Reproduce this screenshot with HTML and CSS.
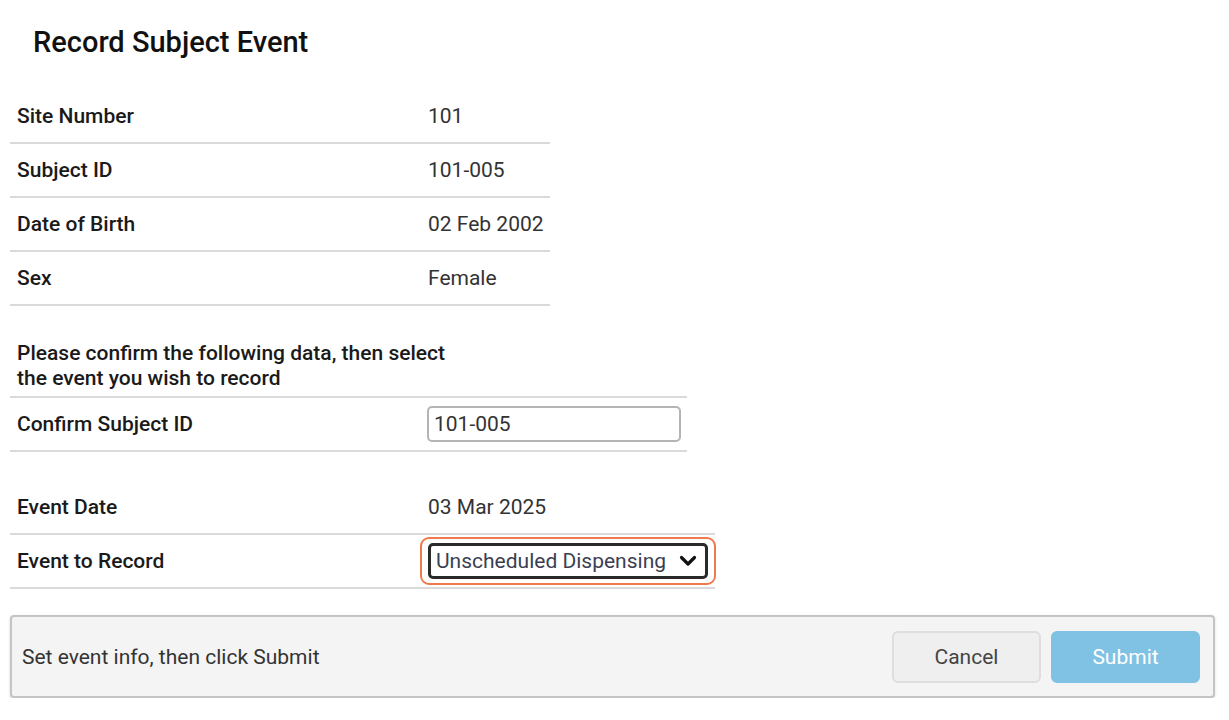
FILE: index.html
```html
<!DOCTYPE html>
<html>
<head>
<meta charset="utf-8">
<link rel="stylesheet" href="styles.css">
</head>
<body>
<div class="page">
  <h1 class="title">Record Subject Event</h1>

  <div class="table t1">
    <div class="row"><div class="label">Site Number</div><div class="value">101</div></div>
    <div class="row"><div class="label">Subject ID</div><div class="value">101-005</div></div>
    <div class="row"><div class="label">Date of Birth</div><div class="value">02 Feb 2002</div></div>
    <div class="row"><div class="label">Sex</div><div class="value">Female</div></div>
  </div>

  <div class="table t2">
    <div class="intro">Please confirm the following data, then select<br>the event you wish to record</div>
    <div class="row"><div class="label">Confirm Subject ID</div><div class="value"><div class="input">101-005</div></div></div>
  </div>

  <div class="table t3">
    <div class="row"><div class="label">Event Date</div><div class="value">03 Mar 2025</div></div>
    <div class="row"><div class="label">Event to Record</div><div class="value">
      <div class="focus-ring"><div class="select"><span>Unscheduled Dispensing</span>
        <svg class="chev" width="18" height="12" viewBox="0 0 18 12"><path d="M2.5 2.5 L9 9 L15.5 2.5" fill="none" stroke="#111" stroke-width="3.2" stroke-linecap="round" stroke-linejoin="round"/></svg>
      </div></div>
    </div></div>
  </div>

  <div class="footer">
    <div class="footer-text">Set event info, then click Submit</div>
    <div class="actions">
      <button class="btn cancel">Cancel</button>
      <button class="btn submit">Submit</button>
    </div>
  </div>
</div>
</body>
</html>
```

FILE: styles.css
```css
html, body {
  margin: 0;
  padding: 0;
  background: #ffffff;
}
body {
  font-family: Roboto, "Liberation Sans", Arial, sans-serif;
  color: #1e1e1e;
}
.page {
  padding: 0 14px 0 10px;
}
.title {
  margin: 0;
  padding: 24px 0 0 23px;
  height: 66px;
  box-sizing: border-box;
  font-size: 29px;
  font-weight: 500;
  line-height: 36px;
  color: #111;
}
.table {
  display: flex;
  flex-direction: column;
}
.t1 { width: 540px; margin-top: 24px; }
.t2 { width: 677px; margin-top: 35px; }
.t3 { width: 705px; margin-top: 29px; }
.row {
  display: grid;
  grid-template-columns: 418px 1fr;
  align-items: center;
  height: 52px;
  border-bottom: 2px solid #dadada;
  font-size: 21px;
}
.label {
  padding-left: 7px;
  font-weight: 500;
  color: #1a1a1a;
}
.value {
  color: #333;
}
.intro {
  padding: 0 0 5px 7px;
  font-size: 21px;
  font-weight: 500;
  line-height: 25px;
  color: #1a1a1a;
  border-bottom: 2px solid #dadada;
}
.input {
  width: 254px;
  height: 36px;
  box-sizing: border-box;
  margin-left: -1px;
  border: 2px solid #b4b4b4;
  border-radius: 5px;
  padding: 0 5px;
  display: flex;
  align-items: center;
  color: #333;
}
.focus-ring {
  margin-left: -8px;
  width: 296px;
  height: 48px;
  box-sizing: border-box;
  border: 2px solid #f07a4e;
  border-radius: 9px;
  padding: 4px 6px;
}
.select {
  height: 36px;
  box-sizing: border-box;
  border: 3px solid #2a2a2a;
  border-radius: 5px;
  display: flex;
  align-items: center;
  justify-content: space-between;
  padding: 0 8px 0 5px;
  color: #3a3f52;
  white-space: nowrap;
  overflow: hidden;
}
.chev { flex: none; }
.footer {
  margin-top: 26px;
  width: 1205px;
  height: 83px;
  box-sizing: border-box;
  background: #f4f4f4;
  border: 2px solid #c4c4c4;
  border-radius: 4px;
  box-shadow: 0 1px 3px rgba(0,0,0,0.15);
  display: flex;
  align-items: center;
  justify-content: space-between;
  padding: 0 13px 0 10px;
}
.footer-text {
  font-size: 21px;
  color: #333;
}
.actions {
  display: flex;
  gap: 10px;
}
.btn {
  font-family: Roboto, "Liberation Sans", Arial, sans-serif;
  font-size: 21px;
  width: 149px;
  height: 52px;
  border-radius: 6px;
  cursor: pointer;
}
.cancel {
  background: #efefef;
  border: 2px solid #dedede;
  color: #444;
}
.submit {
  background: #7fc2e4;
  border: 2px solid #7fc2e4;
  color: #ffffff;
}
```
